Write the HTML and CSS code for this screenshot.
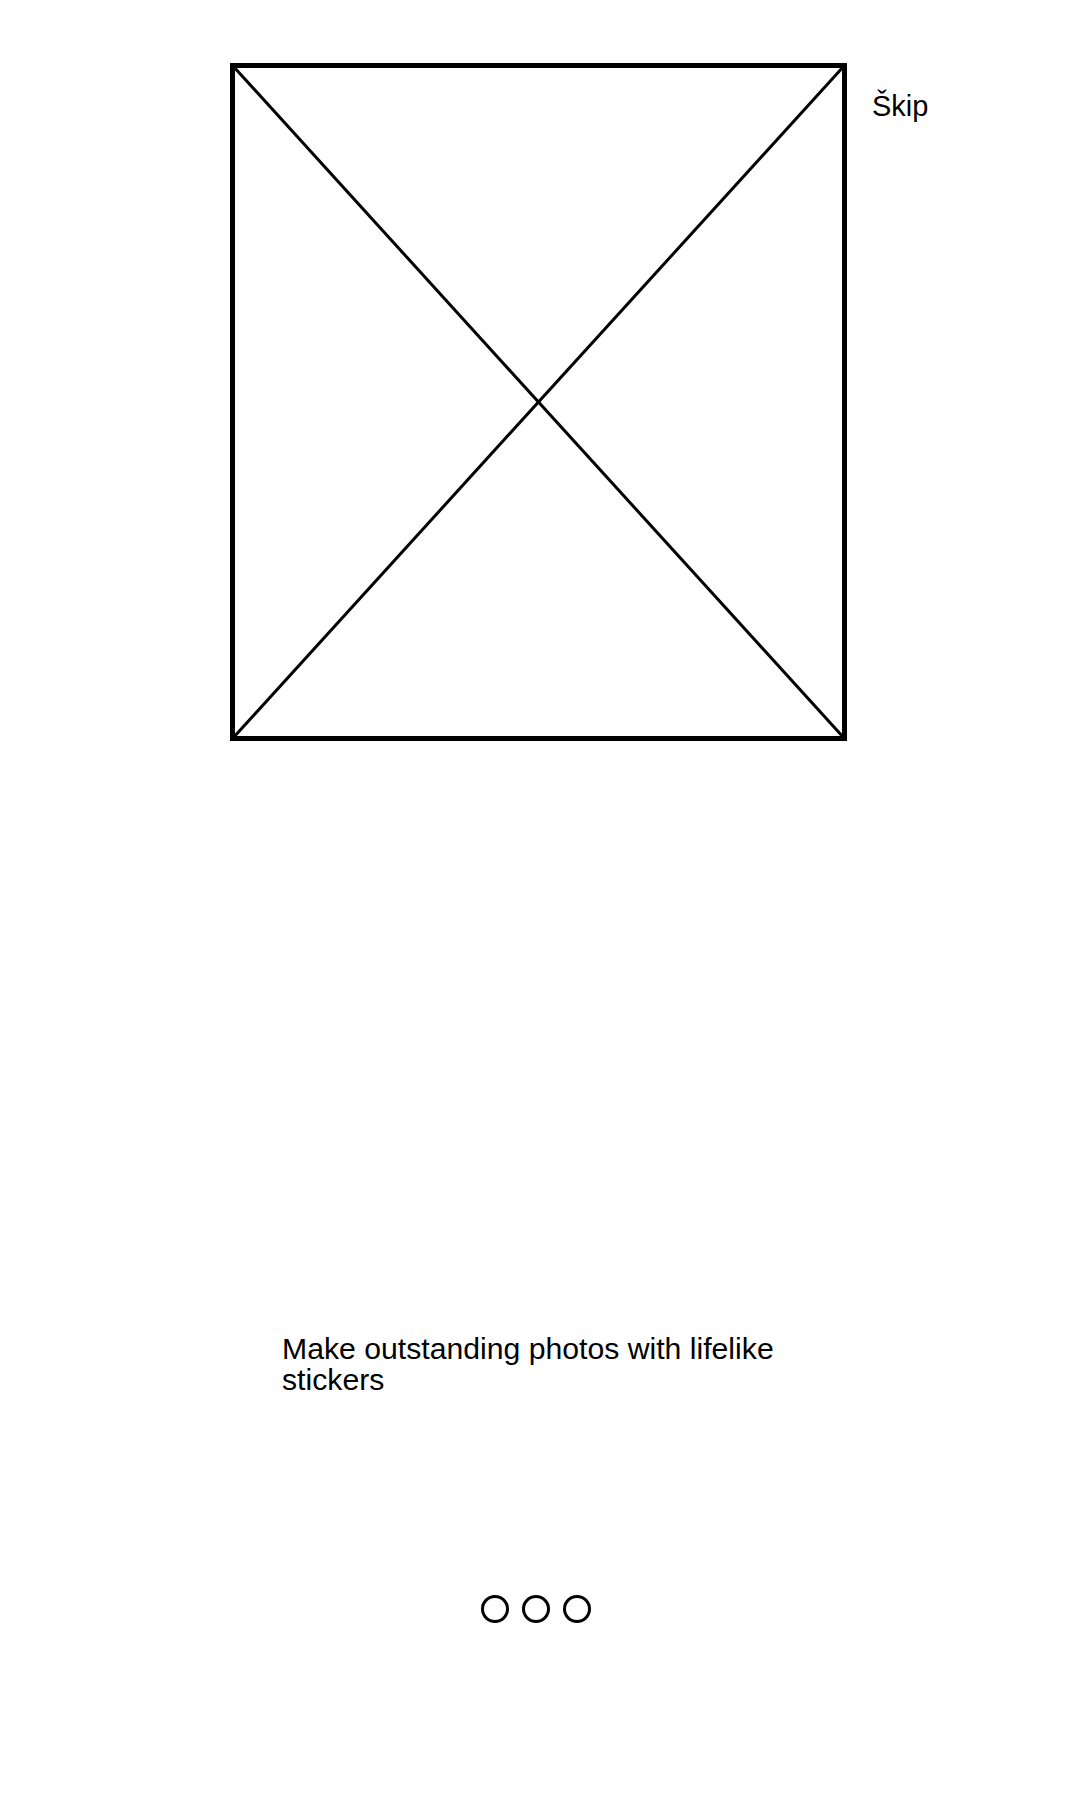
FILE: index.html
```html
<!DOCTYPE html>
<html lang="en">
<head>
<meta charset="utf-8">
<title>Onboarding</title>
<link rel="stylesheet" href="styles.css">
</head>
<body>
<div class="screen">
  <div class="top">
    <svg class="placeholder" width="617" height="678" viewBox="0 0 617 678" aria-hidden="true">
      <rect x="2.5" y="2.5" width="612" height="673" fill="none" stroke="#000" stroke-width="5"/>
      <line x1="3" y1="3" x2="614" y2="675" stroke="#000" stroke-width="3"/>
      <line x1="614" y1="3" x2="3" y2="675" stroke="#000" stroke-width="3"/>
    </svg>
    <a class="skip">Škip</a>
  </div>
  <p class="caption">Make outstanding photos with lifelike stickers</p>
  <div class="dots">
    <span class="dot"></span>
    <span class="dot"></span>
    <span class="dot"></span>
  </div>
</div>
</body>
</html>
```

FILE: styles.css
```css
html, body {
  margin: 0;
  padding: 0;
  background: #fff;
}

.screen {
  width: 1080px;
  height: 1800px;
  font-family: "Liberation Sans", Arial, sans-serif;
  color: #000;
  display: flex;
  flex-direction: column;
}

.top {
  display: flex;
  align-items: flex-start;
  gap: 25px;
  padding: 63px 0 0 230px;
}

.placeholder {
  display: block;
  flex: none;
}

.skip {
  font-size: 29px;
  line-height: 32px;
  margin-top: 27px;
}

.caption {
  margin: 592px 0 0 282px;
  width: 514px;
  font-size: 30.2px;
  line-height: 31px;
}

.dots {
  display: flex;
  gap: 13px;
  margin: 200px 0 0 481px;
}

.dot {
  width: 22px;
  height: 22px;
  border: 3px solid #000;
  border-radius: 50%;
  box-sizing: content-box;
}
```
